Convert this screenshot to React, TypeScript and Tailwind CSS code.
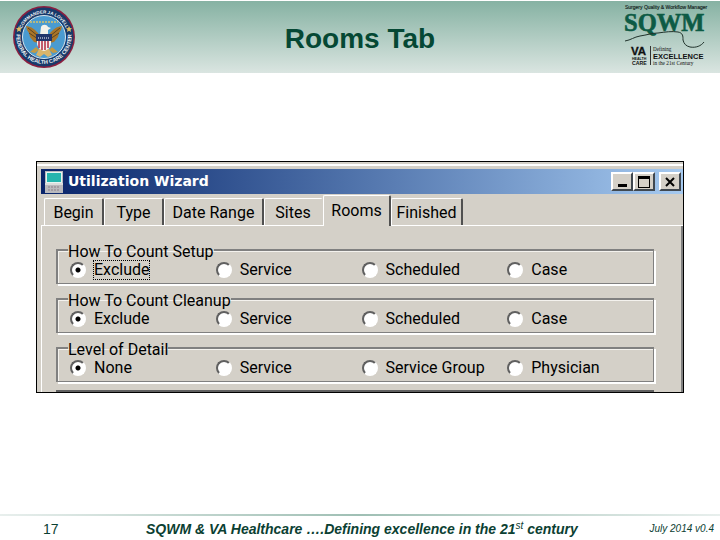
import { useState } from 'react';
import clsx from 'clsx';

const TABS = ['Begin', 'Type', 'Date Range', 'Sites', 'Rooms', 'Finished'];

const TAB_WIDTHS: Record<string, string> = {
  Begin: 'w-[60px]',
  Type: 'w-[60px]',
  'Date Range': 'w-[100px]',
  Sites: 'w-[59px]',
  Rooms: 'w-[68px]',
  Finished: 'w-[72px]',
};

interface OptionGroupProps {
  name: string;
  title: string;
  options: string[];
  focused?: boolean;
}

function HealthCareSeal() {
  return (
    <svg viewBox="0 0 64 64" className="ml-1 size-16" role="img" aria-label="Federal Health Care Center">
      <defs>
        <path id="sealTop" d="M8.500 32a23.500 23.500 0 0 1 47 0" />
        <path id="sealBottom" d="M4.600 28a27.600 27.600 0 1 0 54.800 0" />
      </defs>
      <circle cx="32" cy="32" r="31" fill="#8b1f3f" />
      <circle cx="32" cy="32" r="29.500" fill="#173a6b" />
      <circle cx="32" cy="32" r="21.500" fill="#4a9bd0" stroke="#d8e6ee" strokeWidth="1" />
      <g fill="#f2f4f6" fontFamily="Liberation Sans, sans-serif" fontWeight="700">
        <text fontSize="4.500" textAnchor="middle">
          <textPath href="#sealTop" startOffset="50%">COMMANDER JA LOVELL</textPath>
        </text>
        <text fontSize="5.500" textAnchor="middle">
          <textPath href="#sealBottom" startOffset="50%">FEDERAL HEALTH CARE CENTER</textPath>
        </text>
      </g>
      <path d="M7 21l1 2 2 .2-1.500 1.500.5 2.300-2-1.200-2 1.200.5-2.300L4 23.200l2-.2zM57 21l1 2 2 .2-1.500 1.500.5 2.300-2-1.200-2 1.200.5-2.300-1.500-1.500 2-.2z" fill="#e2bd62" />
      <path d="M18 17h28" stroke="#d7c26a" strokeWidth="1.500" strokeDasharray="2 1" />
      <path d="M14 21c3 0 8 2 11 6l3 4-1 7-5-1-4-5-1-4-2-3zM50 21c-3 0-8 2-11 6l-3 4 1 7 5-1 4-5 1-4 2-3z" fill="#a8752a" />
      <path d="M16 23l10 8M17 28l9 6M48 23l-10 8M47 28l-9 6" stroke="#5c4320" strokeWidth="1" />
      <path d="M24 42l-6 5 5 1 4-3M40 42l6 5-5 1-4-3" fill="#c29a45" />
      <path d="M28 42h8l4 8-4 2-4-3-4 3-4-2z" fill="#d9b56b" />
      <path d="M29 22c1-3 6-3 7 0l3 1-3 2v5h-8z" fill="#f4f2ea" />
      <path d="M25 30h14v8c0 4-3 7-7 8-4-1-7-4-7-8z" fill="#f3f3f3" />
      <path d="M27 35v8M30 35v10M33 35v10M36 35v8" stroke="#b4283f" strokeWidth="1.500" />
      <path d="M24 29h16v7H24z" fill="#22366b" />
      <path d="M26 33h12" stroke="#fff" strokeWidth="1" strokeDasharray="1 1" />
    </svg>
  );
}

function SqwmLogo() {
  return (
    <svg viewBox="0 0 90 68" className="h-17 w-[90px]" role="img" aria-label="SQWM">
      <text x="3" y="6" fontSize="5" fontFamily="Liberation Sans, sans-serif" fill="#14231d" stroke="#14231d" strokeWidth="0.150">
        Surgery Quality &amp; Workflow Manager
      </text>
      <text
        x="2"
        y="28"
        fontSize="24.500"
        fontWeight="700"
        fontFamily="Liberation Serif, serif"
        fill="#0d5b45"
        stroke="#0d5b45"
        strokeWidth="0.600"
      >
        SQWM
      </text>
      <path
        d="M3 38C9 37 12 34 18 33C25 32 30 30 36 30C43 29 50 28 56 29C61 30 61 33 61 37C62 41 64 43 68 44C74 45 79 43 82 39"
        fill="none"
        stroke="#20322b"
        strokeWidth="1"
      />
      <g fill="#111">
        <text x="9" y="52" fontSize="11.500" fontWeight="700" fontFamily="Liberation Sans, sans-serif" stroke="#111" strokeWidth="0.300">VA</text>
        <text x="10" y="56.500" fontSize="3.600" fontWeight="700" fontFamily="Liberation Sans, sans-serif">HEALTH</text>
        <text x="10" y="61.500" fontSize="5.200" fontWeight="700" fontFamily="Liberation Sans, sans-serif">CARE</text>
        <text x="31" y="47.500" fontSize="5.200" fontFamily="Liberation Serif, serif">Defining</text>
        <text x="31" y="56" fontSize="7.500" fontWeight="700" fontFamily="Liberation Sans, sans-serif">EXCELLENCE</text>
        <text x="31" y="62" fontSize="5.300" fontFamily="Liberation Serif, serif">in the 21st Century</text>
      </g>
      <path d="M28.500 43v19" stroke="#333" strokeWidth="1" />
    </svg>
  );
}

function WindowIcon() {
  return (
    <svg viewBox="0 0 18 22" className="h-[22px] w-[18px]" aria-hidden="true">
      <path d="M0 0h18v22H0z" fill="#b9b9bd" />
      <path d="M1 1h16v11H1z" fill="#e4f4f2" />
      <path d="M2 2h14v9H2z" fill="#25b5ae" />
      <path d="M0 12h18v2H0z" fill="#dcdcdc" />
      <path d="M3 16h12M3 19h12" stroke="#8d7f88" strokeWidth="1" strokeDasharray="2 1" />
    </svg>
  );
}

function OptionGroup({ name, title, options, focused }: OptionGroupProps) {
  const [selected, setSelected] = useState(options[0]);

  return (
    <fieldset className="border-2 border-r border-b border-[#808080] pb-[3px] pl-3 shadow-[2px_2px_0_#fff,inset_1px_1px_0_#f4f2ee]">
      <legend className="-ml-[2px] pt-1 text-base leading-4">{title}</legend>
      <div className="grid grid-cols-4">
        {options.map((option) => (
          <label key={option} className="flex h-5 items-center gap-2">
            <input
              type="radio"
              name={name}
              checked={selected === option}
              onChange={() => setSelected(option)}
              className="size-4 shrink-0 appearance-none rounded-full border-2 border-t-[#606060] border-r-white border-b-white border-l-[#606060] bg-white checked:bg-[radial-gradient(circle,#000_2px,#fff_3px)]"
            />
            <span
              className={clsx(
                'whitespace-nowrap text-base leading-[18px]',
                focused && selected === option && 'outline-1 outline-dotted outline-black',
              )}
            >
              {option}
            </span>
          </label>
        ))}
      </div>
    </fieldset>
  );
}

function UtilizationWizard() {
  const [active, setActive] = useState('Rooms');
  const buttonClass =
    'flex h-[19px] w-[22px] items-center justify-center border-t-2 border-l-2 border-r-2 border-b-2 border-t-white border-l-white border-r-[#404850] border-b-[#404850] bg-[#d4d0c8]';

  return (
    <section className="overflow-hidden border border-black bg-[#d4d0c8] font-[Roboto,sans-serif] text-black">
      <div className="mt-[2px] border-t-2 border-white pt-[3px] pl-1">
        <header className="flex h-[25px] items-center bg-linear-to-r from-[#0a246a] to-[#a6caf0] pr-[2px] pl-1">
          <WindowIcon />
          <h2 className="ml-[5px] flex-1 font-['DejaVu_Sans',sans-serif] text-[14px] font-bold text-white">
            Utilization Wizard
          </h2>
          <button type="button" aria-label="Minimize" className={buttonClass}>
            <svg viewBox="0 0 16 14" className="h-[14px] w-4"><path d="M4 9h9v3H4z" /></svg>
          </button>
          <button type="button" aria-label="Maximize" className={buttonClass}>
            <svg viewBox="0 0 16 14" className="h-[14px] w-4">
              <path d="M2 1h12v12H2zM3 4v8h10V4z" fillRule="evenodd" />
            </svg>
          </button>
          <button type="button" aria-label="Close" className={clsx(buttonClass, 'ml-1')}>
            <svg viewBox="0 0 16 14" className="h-[14px] w-4">
              <path d="M4 3l8 8M12 3L4 11" stroke="#000" strokeWidth="2" />
            </svg>
          </button>
        </header>

        <nav role="tablist" className="flex items-end border-b border-white pt-px pl-[3px]">
          {TABS.map((tab) => (
            <button
              key={tab}
              type="button"
              role="tab"
              aria-selected={tab === active}
              onClick={() => setActive(tab)}
              className={clsx(
                'rounded-t-xs border-t border-l border-r-2 border-t-white border-l-white text-base leading-5 whitespace-nowrap',
                TAB_WIDTHS[tab],
                tab === 'Sites' ? 'border-r-transparent' : 'border-r-[#505050]',
                tab === active ? '-mb-px h-[31px] bg-[#d4d0c8] pb-px' : 'h-[27px] pt-[2px]',
              )}
            >
              {tab}
            </button>
          ))}
        </nav>

        <div className="border-r-2 border-l border-r-[#808080] border-l-white pt-[14px] pr-[27px] pl-[14px]">
          <div className="flex flex-col gap-[5px]">
            <OptionGroup name="setup" title="How To Count Setup" options={['Exclude', 'Service', 'Scheduled', 'Case']} focused />
            <OptionGroup name="cleanup" title="How To Count Cleanup" options={['Exclude', 'Service', 'Scheduled', 'Case']} />
            <OptionGroup name="detail" title="Level of Detail" options={['None', 'Service', 'Service Group', 'Physician']} />
          </div>
          <div className="mt-2 h-[2px] border-t-2 border-[#606060]" />
        </div>
      </div>
    </section>
  );
}

export default function App() {
  return (
    <div className="flex min-h-screen flex-col bg-white font-['Liberation_Sans',sans-serif] text-[#0b4032]">
      <header className="mt-px grid grid-cols-[1fr_auto_1fr] items-center bg-linear-to-b from-[#86b2a3] to-[#dae5e1] px-2 py-px">
        <HealthCareSeal />
        <h1 className="pt-1 text-[28px] leading-8 font-bold text-[#054834]">Rooms Tab</h1>
        <div className="flex justify-end py-px">
          <SqwmLogo />
        </div>
      </header>

      <main className="flex-1 px-9 pt-[88px]">
        <UtilizationWizard />
      </main>

      <div className="h-[2px] bg-linear-to-r from-[#e8efed] via-[#9fbfb4] to-[#e8efed]" />
      <footer className="flex h-6 items-center pt-[2px] pr-[6px] pl-[43px]">
        <span className="w-[103px] text-[14px] leading-4">17</span>
        <p className="flex-1 text-[14px] leading-4 font-bold whitespace-nowrap italic">
          SQWM &amp; VA Healthcare ….Defining excellence in the 21
          <sup className="text-[10px] font-normal">st</sup> century
        </p>
        <span className="text-[10px] leading-4 italic">July 2014 v0.4</span>
      </footer>
    </div>
  );
}
